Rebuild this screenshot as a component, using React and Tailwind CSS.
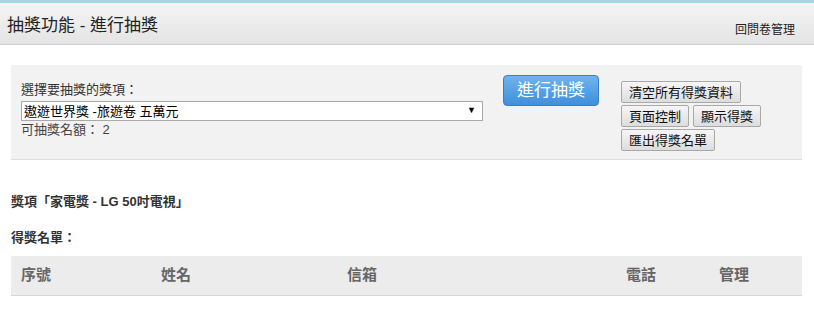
import React from 'react';

const font = { fontFamily: '"Liberation Sans", "Noto Sans CJK TC", sans-serif' };

const GrayButton = ({ children }) => (
  <button className="h-[22px] px-[7px] text-[13px] leading-none text-[#111] bg-gradient-to-b from-[#f6f6f6] to-[#dddddd] border border-[#a8a8a8] rounded-[2px]">
    {children}
  </button>
);

export default function App() {
  return (
    <div className="w-[814px] h-[329px] bg-white overflow-hidden" style={font}>
      {/* Header */}
      <div className="h-[3px] bg-[#a5d6e2]" />
      <div className="h-[42px] flex items-center justify-between pl-[7px] pr-[19px] bg-gradient-to-b from-[#f4f4f4] to-[#e4e4e4] border-b border-[#cfcfcf]">
        <h1 className="text-[17px] text-[#222] leading-none pt-[3px]">抽獎功能 - 進行抽獎</h1>
        <a className="text-[12px] text-[#222] mt-[12px]">回問卷管理</a>
      </div>

      <div className="px-[11px] pr-[12px] pt-[20px]">
        {/* Draw panel */}
        <div className="h-[95px] bg-[#f2f2f2] border-b border-[#dedede] flex pl-[10px]">
          <div className="w-[462px] pt-[17px]">
            <div className="text-[13px] text-[#333] leading-[16px]">選擇要抽獎的獎項：</div>
            <div className="mt-[3px] h-[20px] bg-white border border-[#a9a9a9] flex items-center justify-between pl-[2px] pr-[6px]">
              <span className="text-[13px] text-black leading-none">遨遊世界獎 -旅遊卷 五萬元</span>
              <span className="text-[9px] text-black">▼</span>
            </div>
            <div className="text-[13px] text-[#444] leading-[16px] mt-[1px]">可抽獎名額： 2</div>
          </div>
          <div className="ml-[20px] pt-[10px]">
            <button className="w-[96px] h-[31px] rounded-[4px] border border-[#3a7fc0] bg-gradient-to-b from-[#6fb3ef] to-[#3e8fdc] text-white text-[17px] leading-none">
              進行抽獎
            </button>
          </div>
          <div className="ml-[22px] pt-[16px] flex flex-col gap-[2px] items-start">
            <GrayButton>清空所有得獎資料</GrayButton>
            <div className="flex gap-[4px]">
              <GrayButton>頁面控制</GrayButton>
              <GrayButton>顯示得獎</GrayButton>
            </div>
            <GrayButton>匯出得獎名單</GrayButton>
          </div>
        </div>

        {/* Result */}
        <div className="mt-[34px] text-[13px] font-bold text-[#333] leading-[16px]">獎項「家電獎 - LG 50吋電視」</div>
        <div className="mt-[20px] text-[13px] font-bold text-[#333] leading-[16px]">得獎名單：</div>

        <div className="mt-[10px] h-[40px] bg-[#ececec] border-b border-[#d6d6d6] flex items-center text-[15px] font-bold text-[#666]">
          <div className="w-[150px] pl-[10px]">序號</div>
          <div className="w-[186px]">姓名</div>
          <div className="w-[279px]">信箱</div>
          <div className="w-[93px]">電話</div>
          <div>管理</div>
        </div>
      </div>
    </div>
  );
}
